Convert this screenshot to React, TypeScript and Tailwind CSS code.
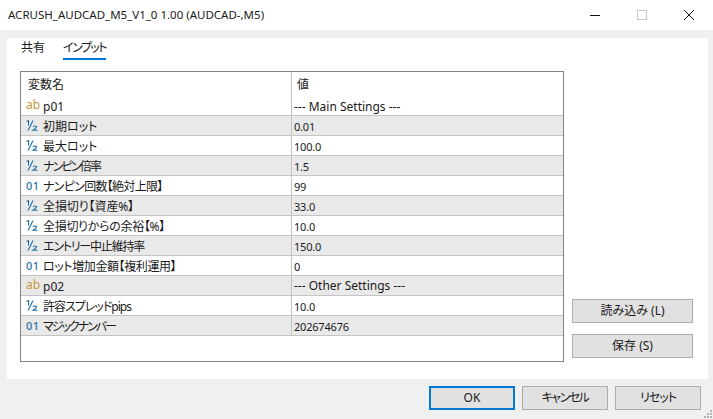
import React from 'react';

type Row = { kind: 'ab' | 'half' | 'int'; name: string; value: string; fit?: string; valueFit?: string };

// fit: narrows the kana and brackets, the original UI font sets them tighter than Noto
const rows: Row[] = [
  { kind: 'ab', name: 'p01', value: '--- Main Settings ---', valueFit: 'text-[12px]' },
  { kind: 'half', name: '初期ロット', value: '0.01' },
  { kind: 'half', name: '最大ロット', value: '100.0' },
  { kind: 'half', name: 'ナンピン倍率', value: '1.5', fit: 'tracking-[-1.8px]' },
  { kind: 'int', name: 'ナンピン回数【絶対上限】', value: '99', fit: 'tracking-[-0.7px]' },
  { kind: 'half', name: '全損切り【資産%】', value: '33.0', fit: 'tracking-[-0.1px]' },
  { kind: 'half', name: '全損切りからの余裕【%】', value: '10.0', fit: 'tracking-[-0.3px]' },
  { kind: 'half', name: 'エントリー中止維持率', value: '150.0', fit: 'tracking-[-1.2px]' },
  { kind: 'int', name: 'ロット増加金額【複利運用】', value: '0', fit: 'tracking-[-0.4px]' },
  { kind: 'ab', name: 'p02', value: '--- Other Settings ---', valueFit: 'text-[12px]' },
  { kind: 'half', name: '許容スプレッドpips', value: '10.0', fit: 'tracking-[-1px]' },
  { kind: 'int', name: 'マジックナンバー', value: '202674676', fit: 'tracking-[-2px]' },
];

const TypeIcon = ({ kind }: { kind: Row['kind'] }) => {
  if (kind === 'ab') {
    return <span className="w-[17px] text-[12px] leading-none text-[#c8963c] -mt-[2px]">ab</span>;
  }
  if (kind === 'int') {
    return <span className="w-[17px] text-[11px] font-medium leading-none text-[#1f6fa8] tracking-[0.5px]">01</span>;
  }
  return (
    <svg width="12" height="11" viewBox="0 0 12 11" fill="none" stroke="#1f6fa8" strokeWidth="1.1" className="-mt-[1px] mr-[5px]">
      <path d="M0.5 1.6 L2.5 0.6 V5.5" />
      <path d="M2 10.5 L7 0.5" />
      <path d="M7 6.8 Q9 5.4 10.5 6.4 Q11 7.8 7 10.2 H11.5" />
    </svg>
  );
};

const Btn = ({ label, className = '' }: { label: string; className?: string }) => (
  <div className={`flex items-center justify-center bg-[#e1e1e1] border text-[12px] leading-none text-[#1a1a1a] [font-feature-settings:"palt"] ${className}`}>
    {label}
  </div>
);

export default function App() {
  return (
    <div
      className="w-[713px] h-[419px] flex flex-col bg-[#f0f0f0] overflow-hidden relative text-[#1a1a1a]"
      style={{ fontFamily: '"Noto Sans", "Noto Sans CJK JP", sans-serif' }}
    >
      {/* title bar */}
      <div className="h-[30px] bg-white flex items-center pl-[8px] shrink-0">
        <span className="text-[11.5px] leading-none flex-1 -mt-[1px]">ACRUSH_AUDCAD_M5_V1_0 1.00 (AUDCAD-,M5)</span>
        <svg width="12" height="12" viewBox="0 0 12 12" className="mr-[35px]" stroke="#111" fill="none">
          <path d="M1 6.5 H11" />
        </svg>
        <svg width="12" height="12" viewBox="0 0 12 12" className="mr-[35px]" stroke="#c8c8c8" fill="none">
          <rect x="1.5" y="1.5" width="9" height="9" />
        </svg>
        <svg width="12" height="12" viewBox="0 0 12 12" className="mr-[18px]" stroke="#111" fill="none">
          <path d="M1 1 L11 11 M11 1 L1 11" />
        </svg>
      </div>

      {/* panel */}
      <div className="mt-[8px] ml-[7px] w-[701px] h-[341px] bg-white flex shrink-0">
        <div className="pl-[13px] w-[565px] shrink-0">
          <div className="h-[33px] flex items-start gap-[18px] pl-[1px] [font-feature-settings:'palt']">
            <div className="h-[22px] mt-[2px] text-[12px] leading-[16px] text-[#1a1a1a]">共有</div>
            <div className="h-[20px] mt-[2px] text-[12px] tracking-[-1.5px] leading-[16px] border-b-2 border-[#0078d4]">インプット</div>
          </div>
          <div className="w-[544px] h-[291px] border border-[#828282] flex flex-col [font-feature-settings:'palt']">
            <div className="h-[25px] flex text-[12px] shrink-0">
              <div className="w-[270px] pl-[7px] flex items-center">変数名</div>
              <div className="flex-1 border-l border-[#c4c4c4] pl-[5px] flex items-center">値</div>
            </div>
            {rows.map((r, i) => (
              <div
                key={i}
                className={`flex text-[12px] leading-none border-b border-[#c4c4c4] shrink-0 ${i % 2 === 1 ? 'bg-[#e9e9e9]' : 'bg-white'} ${i === 0 ? 'h-[19px]' : 'h-[20px]'}`}
              >
                <div className="w-[270px] flex items-center pl-[5px] shrink-0 whitespace-nowrap">
                  <TypeIcon kind={r.kind} />
                  <span className={`mt-[2px] ${r.fit ?? ''}`}>{r.name}</span>
                </div>
                <div className={`flex-1 border-l border-[#c4c4c4] pl-[2px] pt-[1px] flex items-center ${r.valueFit ?? 'text-[11px] tracking-[-0.2px]'}`}>{r.value}</div>
              </div>
            ))}
          </div>
        </div>
        <div className="flex flex-col pt-[261px]">
          <Btn label="読み込み (L)" className="w-[121px] h-[24px] border-[#adadad]" />
          <Btn label="保存 (S)" className="w-[121px] h-[24px] mt-[11px] border-[#adadad]" />
        </div>
      </div>

      {/* footer buttons */}
      <div className="mt-[7px] flex justify-end gap-[7px] pr-[12px]">
        <Btn label="OK" className="w-[86px] h-[24px] border-2 border-[#0078d4]" />
        <Btn label="キャンセル" className="w-[86px] h-[24px] border-[#adadad] tracking-[-1.5px]" />
        <Btn label="リセット" className="w-[86px] h-[24px] border-[#adadad] tracking-[-1px]" />
      </div>

      {/* resize grip */}
      <svg width="10" height="10" viewBox="0 0 10 10" className="absolute right-0 bottom-0" fill="#b4b4b4">
        <rect x="7" y="1" width="2" height="2" />
        <rect x="4" y="4" width="2" height="2" />
        <rect x="7" y="4" width="2" height="2" />
        <rect x="1" y="7" width="2" height="2" />
        <rect x="4" y="7" width="2" height="2" />
        <rect x="7" y="7" width="2" height="2" />
      </svg>
    </div>
  );
}
